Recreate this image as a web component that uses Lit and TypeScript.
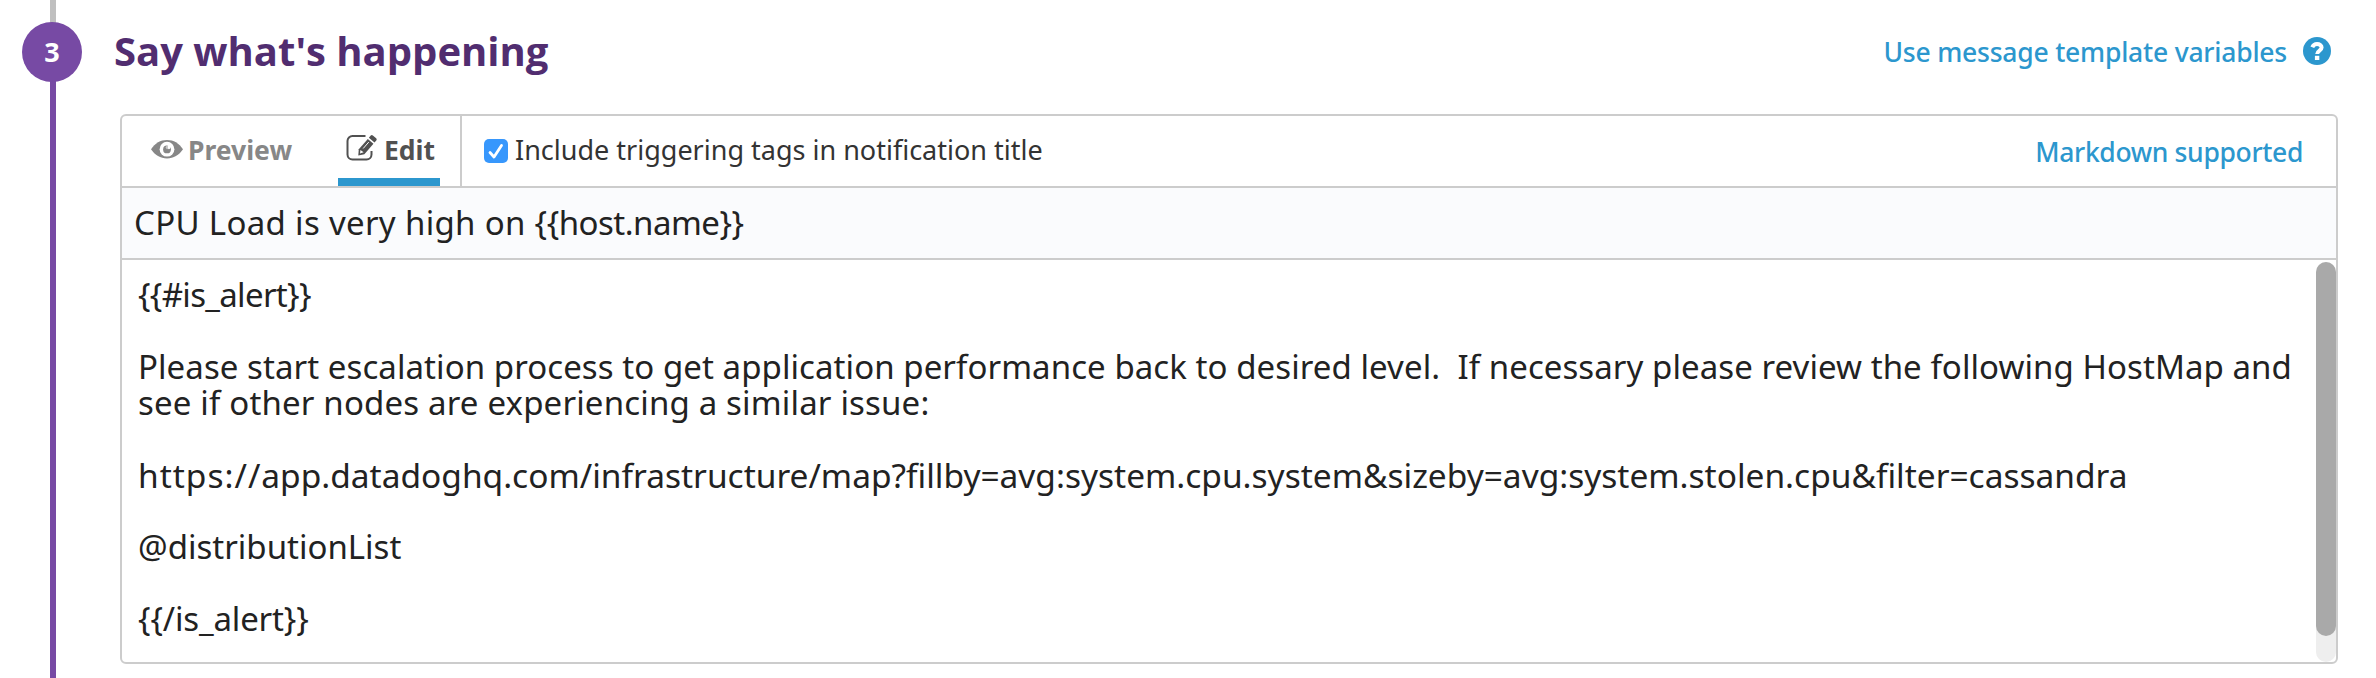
import { LitElement, html, css } from 'lit';
import { customElement } from 'lit/decorators.js';

const eye = html`<svg class="eye" viewBox="0 0 32 19" width="32" height="19">
  <path fill="#878787" d="M0 9.3C4 3.2 9.4 0 16 0s12 3.2 16 9.3C28 15.300 22.600 18.500 16 18.500S4 15.300 0 9.300z"/>
  <circle cx="16" cy="9.200" r="7.400" fill="#fff"/>
  <circle cx="16" cy="9.400" r="3.900" fill="#878787"/>
  <circle cx="17.200" cy="7.200" r="2.300" fill="#fff"/>
  <path d="M16 5.500v3.900h3.900" fill="none" stroke="#878787" stroke-width=".9"/>
</svg>`;

const pencil = html`<svg class="pencil" viewBox="0 0 33 28" width="33" height="28">
  <path d="M19.500 2H6.500A5 5 0 0 0 1.500 7v13.500a5 5 0 0 0 5 5h14a5 5 0 0 0 5-5V17" fill="none" stroke="#515151" stroke-width="2"/>
  <g transform="translate(12.300 21.500) rotate(-49)" fill="#515151">
    <path d="M0 0 5 -3.700H18.800V3.700H5z"/>
    <path d="M20.400 -3.700H23.200a1.500 1.500 0 0 1 1.500 1.500V2.200a1.500 1.500 0 0 1-1.500 1.500H20.400z"/>
    <path d="M2.600 0 5.600 -2 6 1.900z" fill="#fff"/>
    <path d="M8.500 -.9H17" stroke="#fff" stroke-width=".9"/>
  </g>
</svg>`;

const help = html`<svg class="help" viewBox="0 0 28 28" width="28" height="28">
  <circle cx="14" cy="14" r="14" fill="#2c97ce"/>
  <path d="M9.300 10.300C10.200 8.100 11.800 7 14 7c2.700 0 4.600 1.500 4.600 3.600 0 3.200-4.400 2.900-4.400 6.500" fill="none" stroke="#fff" stroke-width="4"/>
  <rect x="11.900" y="18.800" width="4.400" height="4.200" fill="#fff"/>
</svg>`;

const lines: [unknown, string][] = [
  ['{{#is_alert}}', 'tight'],
  ['', ''],
  ['Please start escalation process to get application performance back to desired level.\u00a0 If necessary please review the following HostMap and', 'first'],
  ['see if other nodes are experiencing a similar issue:', 'second'],
  ['', ''],
  [html`<span class="scheme">https://</span>app.datadoghq.com/infrastructure/map?fillby=avg:system.cpu.system&amp;sizeby=avg:system.stolen.cpu&amp;filter=cassandra`, 'url'],
  ['', ''],
  ['@distributionList', ''],
  ['', ''],
  ['{{/is_alert}}', 'close'],
];

@customElement('app-root')
export class AppRoot extends LitElement {
  static styles = css`
    :host { display: block; height: 678px; overflow: hidden; background: #fff; font-family: "Noto Sans", sans-serif; color: #222; }
    * { box-sizing: border-box; }
    svg { display: block; flex: none; }
    .step { display: grid; grid-template-columns: 104px 1fr; height: 678px; }
    .rail { display: flex; flex-direction: column; align-items: center; }
    .before { width: 6px; height: 23px; margin-left: 2px; background: #bfbfbf; margin-bottom: -1px; }
    .num { width: 60px; height: 60px; border-radius: 50%; background: #774aa4; color: #fff; font: 700 27px/60px "Open Sans", sans-serif; text-align: center; z-index: 1; }
    .after { width: 6px; flex: 1; margin-left: 2px; margin-top: -1px; background: #774aa4; }
    .main { padding: 22px 38px 0 16px; }
    .head { height: 60px; display: flex; align-items: center; justify-content: space-between; margin-left: -6px; padding-right: 7px; }
    h2 { margin: 0; padding-bottom: 3px; font: 700 40px/60px "Open Sans", sans-serif; color: #512d70; white-space: nowrap; }
    a { display: flex; align-items: center; color: #2c97ce; font-size: 26.5px; font-weight: 500; line-height: 36px; white-space: nowrap; }
    .vars { letter-spacing: -.22px; }
    .help { margin: 0 0 2px 16px; }
    .md { margin-left: auto; margin-right: 33px; padding-top: 1px; letter-spacing: -.35px; }
    .panel { margin-top: 32px; height: 550px; border: 2px solid #ccc; border-radius: 6px; overflow: hidden; display: flex; flex-direction: column; }
    .bar { height: 72px; border-bottom: 2px solid #ccc; display: flex; align-items: center; line-height: 36px; white-space: nowrap; }
    .tabs { width: 340px; height: 70px; border-right: 2px solid #ccc; display: flex; padding-left: 29px; font-size: 26.5px; font-weight: 700; }
    .tab { display: flex; align-items: center; height: 70px; }
    .preview { color: #878787; width: 187px; }
    .preview span { margin-left: 5px; padding-bottom: 2px; }
    .eye { margin-bottom: 4px; }
    .edit { width: 102px; color: #515151; border-bottom: 8px solid #2c97ce; padding-left: 8px; }
    .edit span { margin-left: 5px; padding-top: 6px; }
    .pencil { margin-top: 1px; }
    .opt { display: flex; align-items: center; color: #333; font-size: 27px; padding-left: 22px; }
    .opt span { margin-left: 7px; padding-bottom: 2px; }
    .title { height: 72px; border-bottom: 2px solid #ccc; background: #fafbfd; font-size: 33px; line-height: 36px; padding: 17px 0 0 12px; white-space: pre; letter-spacing: .32px; }
    .var { letter-spacing: -.5px; }
    .body { flex: 1; display: flex; justify-content: space-between; }
    .text { padding: 17px 0 0 16px; font-size: 33px; line-height: 36px; white-space: pre; }
    .line { height: 36px; }
    .first { letter-spacing: .07px; }
    .second { letter-spacing: .17px; }
    .url { font-size: 33.47px; }
    .scheme { letter-spacing: 1px; }
    .tight { letter-spacing: -.68px; }
    .close { letter-spacing: -.15px; }
    .track { width: 20px; margin-top: 2px; height: 400px; border-radius: 10px; background: #eee; }
    .thumb { height: 374px; border-radius: 10px; background: #a9a9a9; }
  `;

  render() {
    return html`<div class="step">
      <div class="rail"><div class="before"></div><div class="num">3</div><div class="after"></div></div>
      <div class="main">
        <div class="head"><h2>Say what's happening</h2><a class="vars">Use message template variables${help}</a></div>
        <div class="panel">
          <div class="bar">
            <div class="tabs">
              <div class="tab preview">${eye}<span>Preview</span></div>
              <div class="tab edit">${pencil}<span>Edit</span></div>
            </div>
            <label class="opt">
              <svg viewBox="0 0 24 24" width="24" height="24"><rect width="24" height="24" rx="5" fill="#3797fc"/><path d="M6 13.500 10 18 17.500 6.500" fill="none" stroke="#fff" stroke-width="2.800" stroke-linecap="round" stroke-linejoin="round"/></svg>
              <span>Include triggering tags in notification title</span>
            </label>
            <a class="md">Markdown supported</a>
          </div>
          <div class="title">CPU Load is very high on <span class="var">{{host.name}}</span></div>
          <div class="body">
            <div class="text">${lines.map(([t, c]) => html`<div class="line ${c}">${t}</div>`)}</div>
            <div class="track"><div class="thumb"></div></div>
          </div>
        </div>
      </div>
    </div>`;
  }
}
